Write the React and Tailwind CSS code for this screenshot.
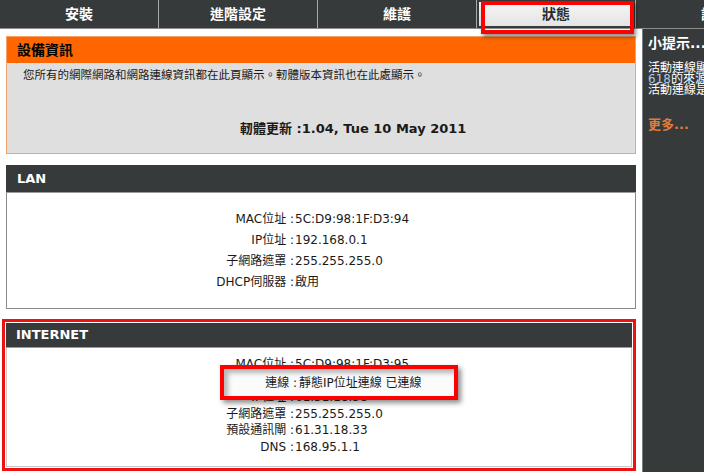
import React from "react";

const FONT = "font-['DejaVu_Sans','Noto_Sans_CJK_TC',sans-serif]";

function Row({ label, value, lh, hidden }) {
  return (
    <div className={`flex whitespace-nowrap ${lh} ${hidden ? "invisible" : ""}`}>
      <span className="w-[287px] shrink-0 text-right">{label} :</span>
      <span className="pl-[1px]">{value}</span>
    </div>
  );
}

function Tab({ label, active, last }) {
  return (
    <div
      className={`flex h-full shrink-0 items-center justify-center ${
        last ? "w-[158px]" : "w-[159px] border-r border-[#a8a8a8]"
      } ${active ? "p-[2px]" : ""}`}
    >
      {active ? (
        <div className="flex h-full w-full items-center justify-center bg-gradient-to-b from-[#f6f6f6] to-[#e4e4e4] text-[14px] font-bold text-[#2a2a2a]">
          {label}
        </div>
      ) : (
        <span className="text-[14px] font-bold text-white">{label}</span>
      )}
    </div>
  );
}

export default function App() {
  return (
    <div className={`relative h-[472px] w-[704px] overflow-hidden bg-white text-[12px] text-[#1a1a1a] ${FONT}`}>
      {/* top tabs */}
      <nav className="flex h-[29px] border-b border-[#8c8c8c] bg-[#363a3b]">
        <Tab label="安裝" />
        <Tab label="進階設定" />
        <Tab label="維護" />
        <Tab label="狀態" active />
        <Tab label="說明" last />
      </nav>

      <div className="flex">
        {/* main column */}
        <main className="w-[636px] shrink-0 pl-[6px] pt-[7px]">
          {/* device info */}
          <section className="border border-[#f2a36c]">
            <div className="flex h-[26px] items-center bg-[#ff6600] pl-[10px] text-[14px] font-bold text-black">
              設備資訊
            </div>
            <div className="h-[90px] bg-[#dfdfdf] pl-[16px] pt-[5px]">
              <p className="text-[11.5px] leading-[14px]">
                您所有的網際網路和網路連線資訊都在此頁顯示。軔體版本資訊也在此處顯示。
              </p>
              <p className="mt-[39px] pl-[217px] text-[13px] font-bold leading-[16px] whitespace-nowrap">
                軔體更新 :1.04, Tue 10 May 2011
              </p>
            </div>
          </section>

          {/* LAN */}
          <section className="mt-[11px]">
            <div className="flex h-[28px] items-center border-b border-[#9a9a9a] bg-[#363a3b] pl-[11px] text-[13px] font-bold text-white">
              LAN
            </div>
            <div className="border border-t-0 border-[#8a8a8a] pb-[15px] pt-[16px]">
              <Row lh="leading-[21px]" label="MAC位址" value="5C:D9:98:1F:D3:94" />
              <Row lh="leading-[21px]" label="IP位址" value="192.168.0.1" />
              <Row lh="leading-[21px]" label="子網路遮罩" value="255.255.255.0" />
              <Row lh="leading-[21px]" label="DHCP伺服器" value="啟用" />
            </div>
          </section>

          {/* INTERNET */}
          <section className="-ml-[4px] mt-[10px] w-[634px] border-[3px] border-[#ee1111] p-[1px]">
            <div className="flex h-[25px] items-center border-b border-[#9a9a9a] bg-[#363a3b] pl-[10px] text-[13px] font-bold text-white">
              INTERNET
            </div>
            <div className="border border-t-0 border-[#c8c8c8] pb-[10px] pt-[8px]">
              <Row lh="leading-[16.6px]" label="MAC位址" value="5C:D9:98:1F:D3:95" />
              <Row lh="leading-[16.6px]" label="連線" value="靜態IP位址連線 已連線" hidden />
              <Row lh="leading-[16.6px]" label="IP位址" value="61.31.18.38" />
              <Row lh="leading-[16.6px]" label="子網路遮罩" value="255.255.255.0" />
              <Row lh="leading-[16.6px]" label="預設通訊閘" value="61.31.18.33" />
              <Row lh="leading-[16.6px]" label="DNS" value="168.95.1.1" />
            </div>
          </section>
        </main>

        {/* hints sidebar */}
        <aside className="ml-[6px] h-[443px] w-[200px] shrink-0 border-l border-[#7a7e80] bg-[#363a3b] pl-[5px] pt-[7px] text-white">
          <h3 className="text-[14px] font-bold leading-[14px] whitespace-nowrap">小提示...</h3>
          <p className="mt-[13px] text-[12px] leading-[11px] whitespace-nowrap">
            活動連線顯示
            <br />
            <span className="text-[#a9c9ec]">618</span>的來源
            <br />
            活動連線是
          </p>
          <p className="mt-[22px] text-[13px] font-bold leading-[14px] text-[#e07b3a]">更多...</p>
        </aside>
      </div>

      {/* red highlight over the active tab */}
      <div className="absolute left-[481px] top-[1px] h-[33px] w-[153px] border-[4px] border-[#ff0000] shadow-[2px_3px_4px_rgba(0,0,0,0.45)]"></div>

      {/* red highlight callout over connection row */}
      <div className="absolute left-[220px] top-[365px] flex h-[35px] w-[238px] items-center border-[4px] border-[#ff0000] bg-[#fbfbfb] shadow-[inset_4px_4px_5px_rgba(0,0,0,0.28),3px_3px_5px_rgba(0,0,0,0.45)] whitespace-nowrap">
        <span className="w-[73px] shrink-0 text-right">連線 :</span>
        <span className="pl-[2px]">靜態IP位址連線 已連線</span>
      </div>
    </div>
  );
}
